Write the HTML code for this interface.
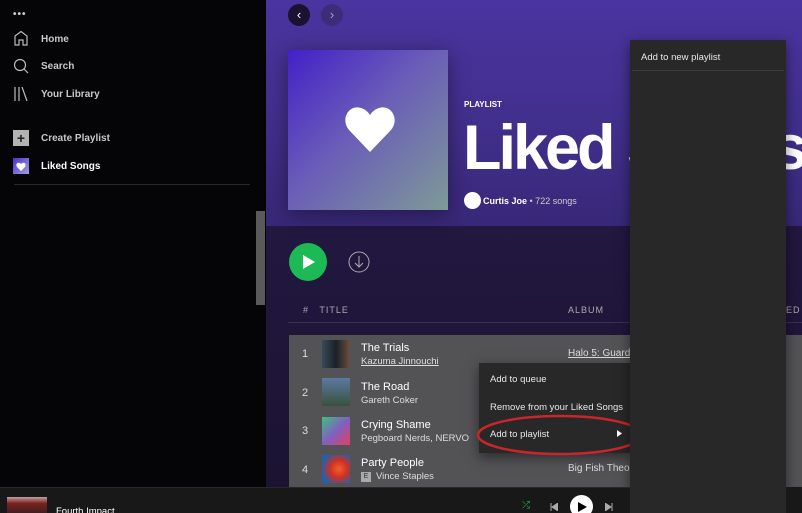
<!DOCTYPE html>
<html><head><meta charset="utf-8"><style>
*{margin:0;padding:0;box-sizing:border-box}
html,body{width:802px;height:513px;overflow:hidden}
body{background:#000;font-family:"Liberation Sans",sans-serif;position:relative;color:#fff}
.a{position:absolute}
.nav{font-size:10px;font-weight:bold;color:#c8c8c8}
.t{font-size:11px;color:#fff}
.s{font-size:9.5px;color:#ddd}
.n{font-size:11px;color:#ddd}
.cm{font-size:9.5px;color:#e8e8e8}
</style></head><body>
<div class="a" style="left:0;top:0;width:266px;height:487px;background:#050406"></div>
<div class="a" style="left:13px;top:9px;font-size:10px;letter-spacing:1px;color:#ccc;font-weight:bold">•••</div>
<svg class="a" style="left:13px;top:30px" width="16" height="16" viewBox="0 0 16 16" fill="none" stroke="#bbb" stroke-width="1.2"><path d="M2 15V6L8 1.5 14 6v9h-4v-5H6v5z"/></svg>
<div class="a nav" style="left:41px;top:34px">Home</div>
<svg class="a" style="left:13px;top:58px" width="16" height="16" viewBox="0 0 16 16" fill="none" stroke="#bbb" stroke-width="1.2"><circle cx="7" cy="7" r="5.5"/><path d="M11 11l4 4"/></svg>
<div class="a nav" style="left:41px;top:61px">Search</div>
<svg class="a" style="left:13px;top:86px" width="16" height="16" viewBox="0 0 16 16" fill="none" stroke="#bbb" stroke-width="1.2"><path d="M2 1v14M6 1v14M9 1l5 14"/></svg>
<div class="a nav" style="left:41px;top:89px">Your Library</div>
<div class="a" style="left:13px;top:130px;width:16px;height:16px;background:#b3b3b3;color:#222;font-size:14px;line-height:16px;text-align:center;font-weight:bold">+</div>
<div class="a nav" style="left:41px;top:133px">Create Playlist</div>
<div class="a" style="left:13px;top:158px;width:16px;height:16px;background:linear-gradient(135deg,#4a2fd0,#9fa0e0)"></div>
<svg class="a" style="left:16px;top:162px" width="10" height="9" viewBox="0 0 10 9"><path d="M5 9L1 5C-1 2 2 -1 5 2 8 -1 11 2 9 5z" fill="#fff"/></svg>
<div class="a nav" style="left:41px;top:161px;color:#fff">Liked Songs</div>
<div class="a" style="left:14px;top:184px;width:236px;height:1px;background:#282828"></div>
<div class="a" style="left:256px;top:211px;width:9px;height:94px;background:#5a5a5a"></div>
<div class="a" style="left:266px;top:0;width:536px;height:226px;background:linear-gradient(180deg,#4a34a0 0%,#42308e 50%,#382878 100%)"></div>
<div class="a" style="left:266px;top:226px;width:536px;height:261px;background:linear-gradient(180deg,#221840 0%,#1b1332 100%)"></div>
<div class="a" style="left:288px;top:4px;width:22px;height:22px;border-radius:50%;background:#1a1230;color:#fff;font-size:13px;text-align:center;line-height:21px">‹</div>
<div class="a" style="left:321px;top:4px;width:22px;height:22px;border-radius:50%;background:#3d2d78;color:#aaa;font-size:13px;text-align:center;line-height:21px">›</div>
<div class="a" style="left:288px;top:50px;width:160px;height:160px;background:linear-gradient(135deg,#4320c8 0%,#6a5cb8 45%,#7e9a98 100%);box-shadow:0 4px 20px rgba(0,0,0,.4)"></div>
<svg class="a" style="left:344px;top:106px" width="52" height="48" viewBox="0 0 52 48"><path d="M26 46L5 24C-4 13 5 -2 17 2 21 3 24 6 26 9 28 6 31 3 35 2 47 -2 56 13 47 24z" fill="#fff"/></svg>
<div class="a" style="left:464px;top:100px;font-size:8px;font-weight:bold">PLAYLIST</div>
<div class="a" style="left:463px;top:108px;font-size:63px;font-weight:bold;letter-spacing:-3px;line-height:80px;white-space:nowrap">Liked Songs</div>
<div class="a" style="left:464px;top:192px;width:17px;height:17px;border-radius:50%;background:#fff"></div>
<div class="a" style="left:483px;top:196px;font-size:9px;white-space:nowrap"><b>Curtis Joe</b> <span style="color:#ccc">• 722 songs</span></div>
<div class="a" style="left:289px;top:243px;width:38px;height:38px;border-radius:50%;background:#1db954"></div>
<svg class="a" style="left:302px;top:255px" width="14" height="14" viewBox="0 0 14 14"><path d="M1 0L13 7 1 14z" fill="#fff"/></svg>
<svg class="a" style="left:348px;top:251px" width="22" height="22" viewBox="0 0 22 22" fill="none" stroke="#aaa" stroke-width="1"><circle cx="11" cy="11" r="10"/><path d="M11 5v11M7 12l4 4 4-4"/></svg>
<div class="a" style="left:303px;top:305px;font-size:9px;color:#aaa;letter-spacing:1px"># &nbsp; TITLE</div>
<div class="a" style="left:568px;top:305px;font-size:9px;color:#aaa;letter-spacing:1px">ALBUM</div>
<div class="a" style="left:786px;top:305px;font-size:9px;color:#aaa;letter-spacing:1px">ED</div>
<div class="a" style="left:288px;top:322px;width:514px;height:1px;background:#3a3050"></div>
<div class="a" style="left:289px;top:335px;width:513px;height:152px;background:#535356"></div>
<div class="a n" style="left:302px;top:348px">1</div>
<div class="a" style="left:322px;top:340px;width:28px;height:28px;background:linear-gradient(90deg,#3a4a5a,#1a2028 50%,#6a5040)"></div>
<div class="a t" style="left:361px;top:342px">The Trials</div>
<div class="a s" style="left:361px;top:356px;text-decoration:underline">Kazuma Jinnouchi</div>
<div class="a s" style="left:568px;top:348px;text-decoration:underline;font-size:10px;white-space:nowrap">Halo 5: Guardians</div>
<div class="a n" style="left:302px;top:387px">2</div>
<div class="a" style="left:322px;top:378px;width:28px;height:28px;background:linear-gradient(180deg,#5a7aa0,#3a5040)"></div>
<div class="a t" style="left:361px;top:381px">The Road</div>
<div class="a s" style="left:361px;top:395px">Gareth Coker</div>
<div class="a n" style="left:302px;top:425px">3</div>
<div class="a" style="left:322px;top:417px;width:28px;height:28px;background:linear-gradient(135deg,#40c080,#8060c0 50%,#e04060)"></div>
<div class="a t" style="left:361px;top:419px">Crying Shame</div>
<div class="a s" style="left:361px;top:433px;white-space:nowrap">Pegboard Nerds, NERVO</div>
<div class="a n" style="left:302px;top:464px">4</div>
<div class="a" style="left:322px;top:455px;width:28px;height:28px;background:radial-gradient(circle at 60% 50%,#f06030,#d03020 40%,#2060b0 80%)"></div>
<div class="a t" style="left:361px;top:457px">Party People</div>
<div class="a" style="left:361px;top:472px;width:10px;height:10px;background:#aaa;font-size:7px;color:#333;text-align:center;line-height:10px">E</div>
<div class="a s" style="left:376px;top:471px">Vince Staples</div>
<div class="a s" style="left:568px;top:463px;font-size:10px;white-space:nowrap">Big Fish Theory</div>
<div class="a" style="left:479px;top:363px;width:151px;height:90px;background:#282828;box-shadow:0 4px 12px rgba(0,0,0,.5)"></div>
<div class="a cm" style="left:490px;top:374px">Add to queue</div>
<div class="a cm" style="left:490px;top:402px;white-space:nowrap">Remove from your Liked Songs</div>
<div class="a cm" style="left:490px;top:429px">Add to playlist</div>
<svg class="a" style="left:617px;top:430px" width="5" height="7"><path d="M0 0L5 3.5 0 7z" fill="#fff"/></svg>
<svg class="a" style="left:470px;top:410px" width="180" height="50"><ellipse cx="90" cy="25" rx="82" ry="19" fill="none" stroke="#c8262a" stroke-width="2.5"/></svg>
<div class="a" style="left:630px;top:40px;width:156px;height:473px;background:#282828;box-shadow:0 4px 12px rgba(0,0,0,.5)"></div>
<div class="a cm" style="left:641px;top:52px">Add to new playlist</div>
<div class="a" style="left:632px;top:70px;width:152px;height:1px;background:#3e3e3e"></div>
<div class="a" style="left:0;top:487px;width:630px;height:26px;background:#181818;border-top:1px solid #282828"></div>
<div class="a" style="left:786px;top:487px;width:16px;height:26px;background:#181818"></div>
<div class="a" style="left:7px;top:497px;width:40px;height:16px;background:linear-gradient(180deg,#c0a0a0,#7a2020 40%,#402020)"></div>
<div class="a" style="left:56px;top:506px;font-size:9.5px;color:#fff">Fourth Impact</div>
<div class="a" style="left:522px;top:500px;font-size:10px;color:#1db954">⤮</div>
<svg class="a" style="left:550px;top:503px" width="8" height="8"><path d="M1 0v8M8 0L2 4 8 8z" fill="#aaa" stroke="#aaa"/></svg>
<div class="a" style="left:570px;top:495px;width:23px;height:23px;border-radius:50%;background:#fff"></div>
<svg class="a" style="left:578px;top:502px" width="9" height="10"><path d="M0 0L9 5 0 10z" fill="#000"/></svg>
<svg class="a" style="left:605px;top:503px" width="8" height="8"><path d="M7 0v8M0 0L6 4 0 8z" fill="#aaa" stroke="#aaa"/></svg>
</body></html>
